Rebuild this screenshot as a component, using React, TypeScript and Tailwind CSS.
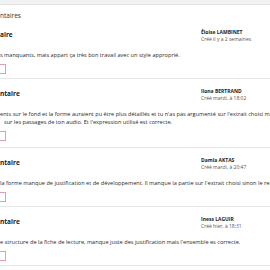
import React from "react";

type C = { head: string; name: string; date: string; lines: string[]; extra?: boolean };

const cards: C[] = [
  { head: "aire", name: "Éloise LAMBINET", date: "Créé il y a 2 semaines", lines: ["s manquants, mais appart ça très bon travail avec un style approprié."] },
  {
    head: "ntaire",
    name: "Ilona BERTRAND",
    date: "Créé mardi, à 18:02",
    lines: [
      "ents sur le fond et la forme auraient pu être plus détaillés et tu n'as pas argumenté sur l'extrait choisi mais",
      "sur les passages de ton audio. Et l'expression utilisé est correcte.",
    ],
    extra: true,
  },
  { head: "ntaire", name: "Damla AKTAS", date: "Créé mardi, à 20:47", lines: ["la forme manque de justification et de développement. Il manque la partie sur l'extrait choisi sinon le reste"] },
  { head: "ntaire", name: "Iness LAGUIR", date: "Créé hier, à 18:31", lines: ["e structure de la fiche de lecture, manque juste des justification mais l'ensemble es correcte."] },
];

export default function App() {
  return (
    <div className="w-[270px] h-[270px] overflow-hidden bg-white text-[#333]" style={{ fontFamily: "'Open Sans', sans-serif" }}>
      <div className="h-[5px] bg-[#f2f2f2] border-b border-[#e3e3e3]" />
      <div className="h-[15px] flex items-end text-[6.5px] leading-[9px] text-[#333]">ntaires</div>
      {cards.map((c, i) => (
        <div key={i} className={c.extra ? "border-b border-[#e6e6e6] pt-[9px] pb-[6px]" : "border-b border-[#e6e6e6] pt-[9px] pb-[4px]"}>
          <div className="flex items-start h-[14px]">
            <div className="flex-1 text-[6.5px] font-bold leading-[10px] mt-[1px] text-[#222]">{c.head}</div>
            <div className="w-[69px] text-[5px] leading-[7px]">
              <div className="font-bold text-[#222] whitespace-nowrap">{c.name}</div>
              <div className="text-[#555] whitespace-nowrap">{c.date}</div>
            </div>
          </div>
          <div className="mt-[8px] text-[5.6px] leading-[8px] text-[#2a2a2a]">
            {c.lines.map((l, j) => (
              <div key={j} className={j > 0 ? "whitespace-nowrap pl-[4px]" : "whitespace-nowrap"}>
                {l}
              </div>
            ))}
          </div>
          <div className="mt-[5px] w-[6px] h-[10px] border border-l-0 border-[#dca1a9] bg-white" />
        </div>
      ))}
    </div>
  );
}
